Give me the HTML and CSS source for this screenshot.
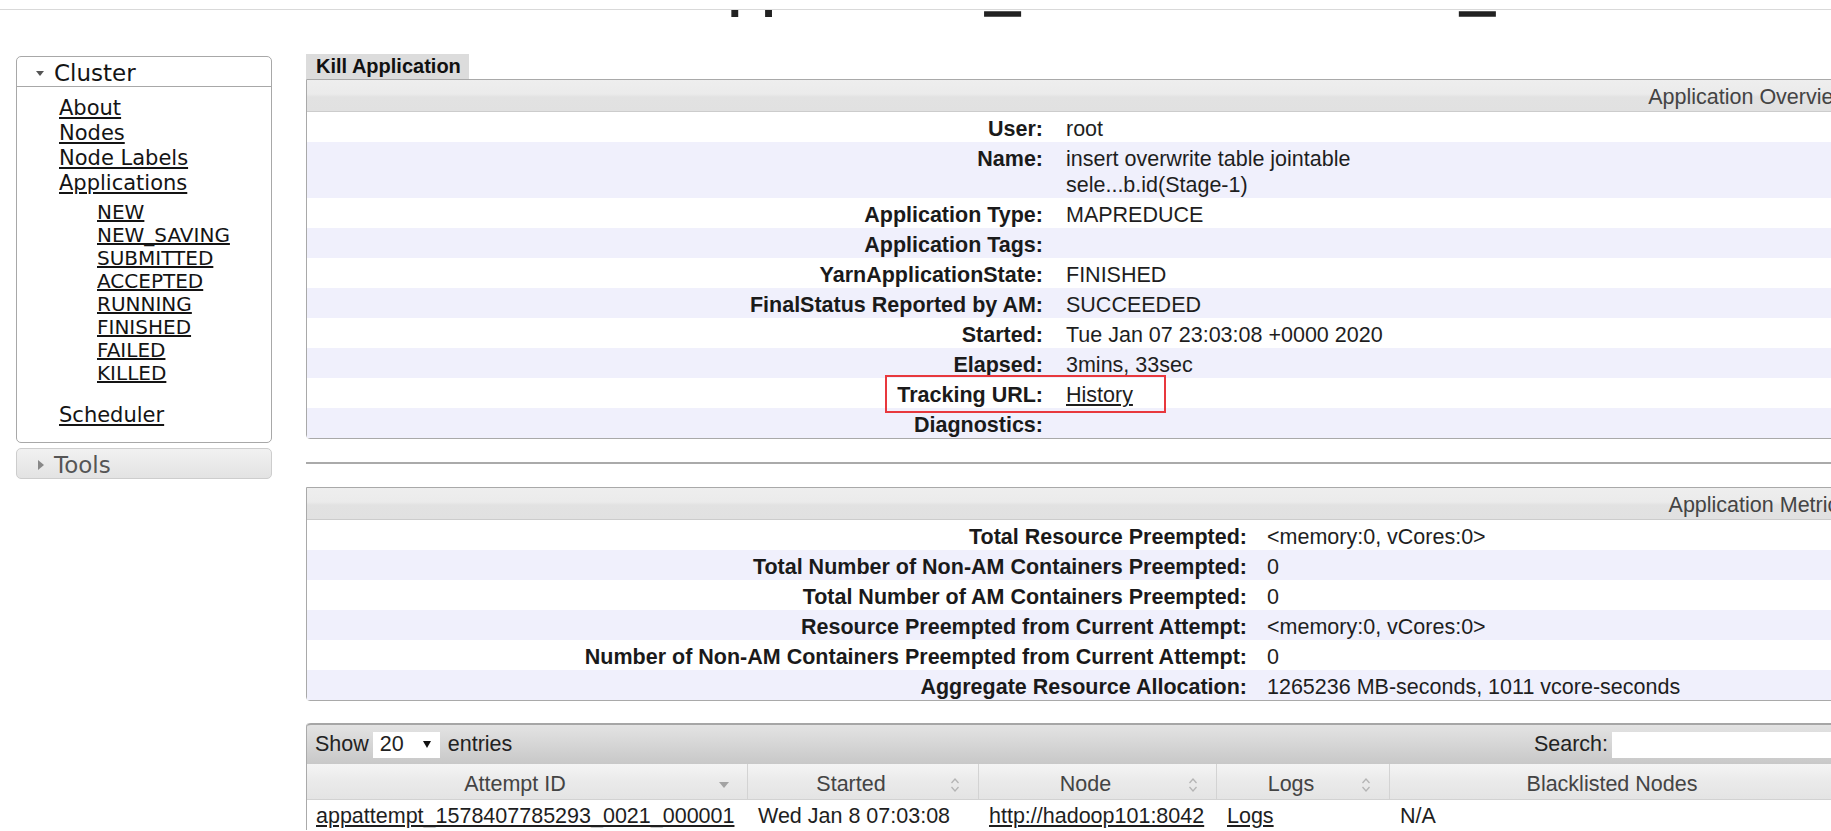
FILE: index.html
```html
<!DOCTYPE html>
<html lang="en">
<head>
<meta charset="utf-8">
<title>Application application_1578407785293_0021</title>
<link rel="stylesheet" href="styles.css">
</head>
<body>
<div class="chrome"></div>
<div class="hdr"><h1 class="hdr-title">application_1578407785293_0021</h1></div>
<div class="page">
  <nav class="sidebar">
    <div class="acc">
      <div class="acc-head"><span class="tri-down"></span><span>Cluster</span></div>
      <ul class="nav">
        <li><a href="#">About</a></li>
        <li><a href="#">Nodes</a></li>
        <li><a href="#">Node Labels</a></li>
        <li><a href="#">Applications</a>
          <ul class="sub">
            <li><a href="#">NEW</a></li>
            <li><a href="#">NEW_SAVING</a></li>
            <li><a href="#">SUBMITTED</a></li>
            <li><a href="#">ACCEPTED</a></li>
            <li><a href="#">RUNNING</a></li>
            <li><a href="#">FINISHED</a></li>
            <li><a href="#">FAILED</a></li>
            <li><a href="#">KILLED</a></li>
          </ul>
        </li>
        <li class="sched"><a href="#">Scheduler</a></li>
      </ul>
    </div>
    <div class="acc acc-closed">
      <div class="acc-head"><span class="tri-right"></span><span>Tools</span></div>
    </div>
  </nav>

  <main class="content">
    <div class="tab">Kill Application</div>
    <section class="box ov">
      <div class="box-head">Application Overview</div>
      <div class="rows">
        <div class="row"><div class="k">User:</div><div class="v">root</div></div>
        <div class="row"><div class="k">Name:</div><div class="v">insert overwrite table jointable<br>sele...b.id(Stage-1)</div></div>
        <div class="row"><div class="k">Application Type:</div><div class="v">MAPREDUCE</div></div>
        <div class="row"><div class="k">Application Tags:</div><div class="v"></div></div>
        <div class="row"><div class="k">YarnApplicationState:</div><div class="v">FINISHED</div></div>
        <div class="row"><div class="k">FinalStatus Reported by AM:</div><div class="v">SUCCEEDED</div></div>
        <div class="row"><div class="k">Started:</div><div class="v">Tue Jan 07 23:03:08 +0000 2020</div></div>
        <div class="row"><div class="k">Elapsed:</div><div class="v">3mins, 33sec</div></div>
        <div class="row"><div class="k">Tracking URL:</div><div class="v"><a href="#">History</a></div></div>
        <div class="row"><div class="k">Diagnostics:</div><div class="v"></div></div>
      </div>
      <div class="hl"></div>
    </section>

    <div class="sep"></div>

    <section class="box mt">
      <div class="box-head">Application Metrics</div>
      <div class="rows">
        <div class="row"><div class="k">Total Resource Preempted:</div><div class="v">&lt;memory:0, vCores:0&gt;</div></div>
        <div class="row"><div class="k">Total Number of Non-AM Containers Preempted:</div><div class="v">0</div></div>
        <div class="row"><div class="k">Total Number of AM Containers Preempted:</div><div class="v">0</div></div>
        <div class="row"><div class="k">Resource Preempted from Current Attempt:</div><div class="v">&lt;memory:0, vCores:0&gt;</div></div>
        <div class="row"><div class="k">Number of Non-AM Containers Preempted from Current Attempt:</div><div class="v">0</div></div>
        <div class="row"><div class="k">Aggregate Resource Allocation:</div><div class="v">1265236 MB-seconds, 1011 vcore-seconds</div></div>
      </div>
    </section>

    <section class="dt">
      <div class="dt-toolbar">
        <span>Show</span>
        <span class="sel"><span>20</span><span class="sel-arrow"></span></span>
        <span>entries</span>
        <span class="spacer"></span>
        <span>Search:</span>
        <span class="search"></span>
      </div>
      <div class="dt-head">
        <div class="th"><span class="lbl">Attempt ID</span><svg class="si" width="10" height="6" viewBox="0 0 10 6"><path d="M0 0H10L5 6Z" fill="#a3a3a3"/></svg></div>
        <div class="th"><span class="lbl">Started</span><svg class="si" width="10" height="16" viewBox="0 0 10 16"><path d="M1.5 6L5 2L8.5 6M1.5 10L5 14L8.5 10" fill="none" stroke="#b4b4b4" stroke-width="1.3"/></svg></div>
        <div class="th"><span class="lbl">Node</span><svg class="si" width="10" height="16" viewBox="0 0 10 16"><path d="M1.5 6L5 2L8.5 6M1.5 10L5 14L8.5 10" fill="none" stroke="#b4b4b4" stroke-width="1.3"/></svg></div>
        <div class="th"><span class="lbl">Logs</span><svg class="si" width="10" height="16" viewBox="0 0 10 16"><path d="M1.5 6L5 2L8.5 6M1.5 10L5 14L8.5 10" fill="none" stroke="#b4b4b4" stroke-width="1.3"/></svg></div>
        <div class="th last"><span class="lbl">Blacklisted Nodes</span></div>
      </div>
      <div class="dt-row">
        <div><a href="#">appattempt_1578407785293_0021_000001</a></div>
        <div>Wed Jan 8 07:03:08</div>
        <div><a href="#">http://hadoop101:8042</a></div>
        <div><a href="#">Logs</a></div>
        <div>N/A</div>
      </div>
    </section>
  </main>
</div>
</body>
</html>
```

FILE: styles.css
```css
* { box-sizing: border-box; }
html, body { margin: 0; padding: 0; overflow: hidden; background: #fff; }
body {
  width: 1831px;
  height: 831px;
  font-family: "Liberation Sans", Arial, sans-serif;
  font-size: 21.5px;
  color: #1e1e1e;
}
a { color: inherit; }

/* browser edge + scrolled page header */
.chrome { height: 10px; border-bottom: 1px solid #d9d9d9; }
.hdr { height: 7px; overflow: hidden; padding-left: 694px; }
.hdr-title {
  margin: -57px 0 0;
  font-size: 61px;
  line-height: 61px;
  font-weight: 400;
  white-space: nowrap;
  color: #222;
  -webkit-text-stroke: 1.5px #222;
}

.page { display: flex; align-items: flex-start; padding-top: 37px; }

/* sidebar */
.sidebar {
  flex: 0 0 256px;
  margin-left: 16px;
  margin-top: 2px;
  font-family: "DejaVu Sans", Verdana, sans-serif;
}
.acc { border: 1px solid #a8a8a8; border-radius: 5px; background: #fff; }
.acc-head {
  display: flex;
  align-items: center;
  gap: 10px;
  height: 30px;
  padding: 3px 0 0 19px;
  border-bottom: 1px solid #a8a8a8;
  font-size: 23px;
  line-height: 26px;
  color: #141414;
}
.tri-down {
  width: 0; height: 0;
  border-left: 4.5px solid transparent;
  border-right: 4.5px solid transparent;
  border-top: 5px solid #555;
}
.tri-right {
  width: 0; height: 0;
  border-top: 5px solid transparent;
  border-bottom: 5px solid transparent;
  border-left: 6px solid #888;
}
.nav {
  list-style: none;
  margin: 0;
  padding: 9px 0 14px 42px;
  font-size: 21px;
  line-height: 25px;
}
.nav a { color: #141414; }
.sub {
  list-style: none;
  margin: 5px 0 0 38px;
  padding: 0;
  font-size: 20px;
  line-height: 23px;
}
.sched { margin-top: 18px; }
.acc-closed {
  margin-top: 5px;
  border-color: #cdcdcd;
  background: linear-gradient(#f1f1f1, #e3e3e3);
}
.acc-closed .acc-head {
  border-bottom: 0;
  height: 29px;
  padding-left: 21px;
  color: #555;
}

/* main column */
.content { flex: 0 0 1552px; margin-left: 34px; }
.tab {
  width: 163px;
  height: 25px;
  padding-left: 10px;
  background: #dcdcdc;
  font-weight: bold;
  font-size: 20px;
  line-height: 24px;
  color: #111;
}
.box {
  position: relative;
  border: 1px solid #a9a9a9;
  border-radius: 0 0 4px 4px;
}
.box-head {
  height: 32px;
  padding: 4px 8px 0 0;
  text-align: right;
  line-height: 27px;
  color: #444;
  border-bottom: 1px solid #cccccc;
  background: linear-gradient(#eeeeee 0%, #ebebeb 45%, #e2e2e2 55%, #e1e1e1 100%);
}
.row { display: grid; line-height: 26px; }
.row:nth-child(even) { background: #f0f0fc; }
.row .k { font-weight: bold; text-align: right; padding: 4px 12px 0 0; color: #1a1a1a; white-space: nowrap; }
.row .v { padding: 4px 0 0 11px; white-space: nowrap; }
.ov .row { grid-template-columns: 748px 1fr; }
.mt .row { grid-template-columns: 950px 1fr; }
.mt .row .k { padding-right: 10px; }
.mt .row .v { padding-left: 10px; }

.hl {
  position: absolute;
  left: 578px;
  top: 295px;
  width: 281px;
  height: 38px;
  border: 2px solid #e8383d;
}

.sep { height: 2px; background: #aaaaaa; margin: 23px 0 23px; }

/* data table */
.dt { margin-top: 22px; border-left: 1px solid #aaaaaa; border-radius: 4px 0 0 0; }
.dt-toolbar {
  display: flex;
  align-items: center;
  height: 41px;
  padding: 0 6px 0 8px;
  border-top: 2px solid #a6a6a6;
  border-radius: 4px 0 0 0;
  background: linear-gradient(#e3e3e3, #c8c8c8);
  color: #222;
  white-space: nowrap;
}
.sel {
  display: flex;
  align-items: center;
  width: 67px;
  height: 26px;
  margin: 0 8px 0 4px;
  padding-left: 7px;
  background: #fff;
}
.sel-arrow {
  width: 0; height: 0;
  margin-left: 19px;
  border-left: 4px solid transparent;
  border-right: 4px solid transparent;
  border-top: 7px solid #111;
}
.spacer { flex: 1; }
.search { width: 240px; height: 26px; margin-left: 4px; background: #fff; }

.dt-head, .dt-row { display: grid; grid-template-columns: 441px 231px 238px 173px 1fr; }
.dt-head {
  height: 36px;
  border-bottom: 1px solid #d2d2d2;
  background: linear-gradient(#f4f4f4, #eaeaea 50%, #e4e4e4);
  color: #444;
}
.th {
  display: flex;
  align-items: center;
  padding: 6px 18px 0 10px;
  border-right: 1px solid #d3d3d3;
  line-height: 29px;
  white-space: nowrap;
}
.th .lbl { flex: 1; text-align: center; }
.th .si { margin-left: 6px; flex: 0 0 auto; }
.th.last { padding-right: 34px; border-right: 0; }
.dt-row { height: 30px; line-height: 28px; padding-top: 2px; }
.dt-row > div { padding-left: 10px; white-space: nowrap; }
.dt-row > div:first-child { padding-left: 9px; }
```
